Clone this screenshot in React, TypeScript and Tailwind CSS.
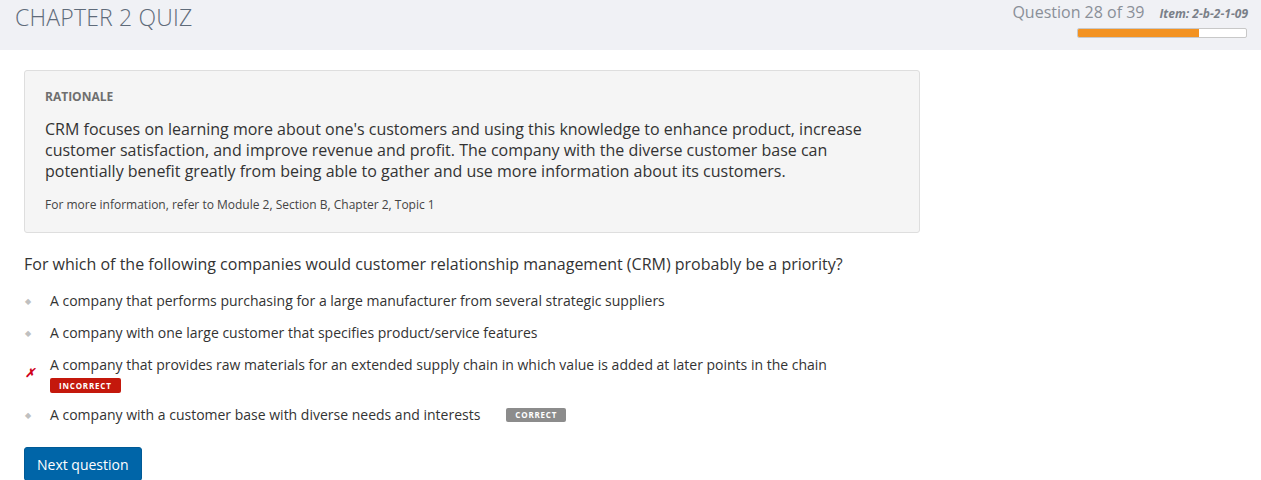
export default function App() {
  const options = [
    { text: "A company that performs purchasing for a large manufacturer from several strategic suppliers" },
    { text: "A company with one large customer that specifies product/service features" },
    { text: "A company that provides raw materials for an extended supply chain in which value is added at later points in the chain", wrong: true },
    { text: "A company with a customer base with diverse needs and interests", correct: true },
  ];

  return (
    <div className="min-h-[480px] bg-white text-[#333] font-['Open_Sans',sans-serif]">
      <header className="h-[50px] bg-[#f0f1f5] flex justify-between pl-[15px] pr-[13px]">
        <h1 className="text-[23px] font-light text-[#5f6b7a] leading-none pt-[6px] tracking-[0.2px]">CHAPTER 2 QUIZ</h1>
        <div className="flex flex-col items-end">
          <div className="flex items-baseline gap-[15px]">
            <span className="text-[16px] text-[#8a8f98] leading-[24px]">Question 28 of 39</span>
            <span className="text-[12px] font-bold italic text-[#7a7f88]">Item: 2-b-2-1-09</span>
          </div>
          <div className="mt-[4px] mr-[1px] w-[170px] h-[10px] border border-[#c8c8c8] rounded-[2px] bg-white overflow-hidden">
            <div className="h-full bg-[#f39221]" style={{ width: `${(28 / 39) * 100}%` }} />
          </div>
        </div>
      </header>

      <main className="px-6 pt-5">
        <section className="w-[896px] bg-[#f5f5f5] border border-[#dedede] rounded-[3px] px-5 pt-[18px] pb-[19px]">
          <h2 className="text-[12px] font-bold text-[#6f6f6f] leading-4">RATIONALE</h2>
          <p className="mt-[14px] text-[16px] leading-[21px] text-[#333]">
            CRM focuses on learning more about one's customers and using this knowledge to enhance product, increase customer satisfaction, and improve revenue and profit. The company with the diverse customer base can potentially benefit greatly from being able to gather and use more information about its customers.
          </p>
          <p className="mt-[15px] text-[12px] leading-4 text-[#444]">
            For more information, refer to Module 2, Section B, Chapter 2, Topic 1
          </p>
        </section>

        <p className="mt-[20px] text-[16px] leading-[22px] text-[#333]">
          For which of the following companies would customer relationship management (CRM) probably be a priority?
        </p>

        <ul className="mt-[16px] flex flex-col gap-[12px]">
          {options.map((o, i) => (
            <li key={i} className="flex items-start">
              <span className="w-[26px] flex justify-start pl-[1px]">
                {o.wrong ? (
                  <span className="text-[#d0021b] text-[12px] font-bold italic leading-none mt-[12px]">✗</span>
                ) : (
                  <span className="text-[#c0c0c0] text-[8px] leading-[20px]">◆</span>
                )}
              </span>
              <div className="flex flex-col">
                <div className="flex items-center">
                  <span className="text-[14px] leading-[20px] text-[#333]">{o.text}</span>
                  {o.correct && (
                    <span className="ml-[26px] bg-[#8c8c8c] text-white text-[8px] font-bold tracking-[0.8px] px-[9px] h-[14px] leading-[14px] rounded-[2px]">CORRECT</span>
                  )}
                </div>
                {o.wrong && (
                  <span className="self-start mt-[3px] bg-[#c4180c] text-white text-[8px] font-bold tracking-[0.8px] px-[9px] h-[15px] leading-[15px] rounded-[2px]">INCORRECT</span>
                )}
              </div>
            </li>
          ))}
        </ul>

        <button className="mt-[22px] bg-[#0065a8] text-white text-[14px] px-[12px] h-[34px] rounded-[3px] border border-[#005a96]">
          Next question
        </button>
      </main>
    </div>
  );
}
